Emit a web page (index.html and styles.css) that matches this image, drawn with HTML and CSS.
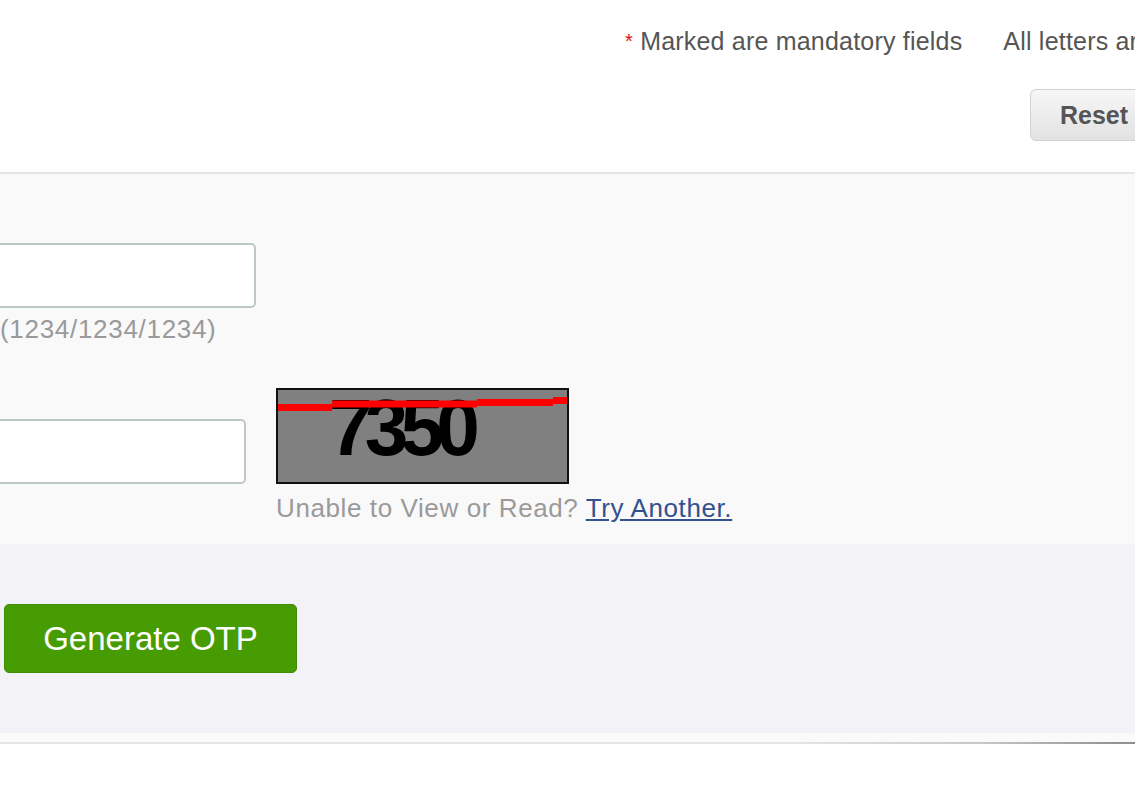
FILE: index.html
```html
<!DOCTYPE html>
<html lang="en">
<head>
  <meta charset="UTF-8">
  <meta name="viewport" content="width=device-width, initial-scale=1.0">
  <title>Generate OTP</title>
  <link rel="stylesheet" href="styles.css">
</head>
<body>
  <header class="top">
    <div class="notes">
      <span class="req">*</span> Marked are mandatory fields<span class="note-gap"></span>All letters are case sensitive
    </div>
    <div class="actions">
      <button class="btn-reset" type="reset">Reset</button>
    </div>
  </header>

  <div class="panel">
    <div class="field">
      <input type="text" class="input input-wide" id="refNumber">
      <div class="hint">(1234/1234/1234)</div>
    </div>

    <div class="captcha-row">
      <input type="text" class="input input-captcha" id="captchaText">
      <div class="captcha">
        <svg width="293" height="96" viewBox="0 0 293 96">
          <rect x="1" y="1" width="291" height="94" fill="#808080" stroke="#111" stroke-width="2"/>
          <text x="53" y="67" font-family="Liberation Sans, sans-serif" font-size="80" font-weight="bold" letter-spacing="-8" fill="#000" textLength="143" lengthAdjust="spacingAndGlyphs">7350</text>
          <path d="M2 19.5H56M56 16H201M201 14.5H277M277 12.5H291" stroke="#f00" stroke-width="7"/>
        </svg>
      </div>
      <div class="captcha-help">Unable to View or Read? <a href="#" class="link">Try Another.</a></div>
    </div>
  </div>

  <div class="footer">
    <button class="btn-otp" type="button">Generate OTP</button>
  </div>
  <div class="footer-edge"></div>
</body>
</html>
```

FILE: styles.css
```css
body {
  margin: 0;
  padding: 0;
  background: #fff;
  font-family: 'Liberation Sans', Arial, sans-serif;
  overflow: hidden;
}
.top {
  padding: 26px 0 31px 0;
  border-bottom: 2px solid #e6e6e6;
  white-space: nowrap;
}
.notes {
  padding-left: 625px;
  font-size: 25px;
  line-height: 30px;
  color: #555;
  letter-spacing: 0.2px;
}
.req {
  color: #e01010;
  font-size: 20px;
  vertical-align: top;
}
.note-gap {
  display: inline-block;
  width: 41px;
}
.actions {
  margin-top: 33px;
  padding-left: 1030px;
}
.btn-reset {
  height: 52px;
  width: 150px;
  padding: 0 0 0 29px;
  text-align: left;
  font-family: inherit;
  font-size: 25px;
  font-weight: bold;
  color: #555;
  background: linear-gradient(#f7f7f7, #e2e2e2);
  border: 1px solid #d2d2d2;
  border-radius: 6px;
}
.panel {
  background: #f9f9f9;
  padding: 69px 0 21px 0;
}
.input {
  display: block;
  box-sizing: border-box;
  height: 65px;
  background: #fff;
  border: 2px solid #bcc7c7;
  border-radius: 5px;
  margin-left: -44px;
}
.input-wide {
  width: 300px;
}
.input-captcha {
  width: 290px;
}
.hint {
  margin-top: 6px;
  font-size: 26px;
  line-height: 30px;
  color: #9a9a9a;
  letter-spacing: 0.7px;
}
.captcha-row {
  margin-top: 44px;
  display: grid;
  grid-template-columns: 246px auto;
  column-gap: 30px;
}
.input-captcha {
  align-self: end;
}
.captcha svg {
  display: block;
}
.captcha-help {
  grid-column: 2;
  margin-top: 9px;
  font-size: 26px;
  line-height: 30px;
  color: #9a9a9a;
  letter-spacing: 0.6px;
  white-space: nowrap;
}
.link {
  color: #34518f;
  text-decoration: underline;
}
.footer {
  background: #f3f3f7;
  padding: 60px 0 60px 4px;
}
.btn-otp {
  display: block;
  width: 293px;
  height: 69px;
  background: #479c04;
  border: 1px solid #3f8d03;
  border-radius: 5px;
  color: #fff;
  font-family: inherit;
  font-size: 33px;
  cursor: pointer;
}
.footer-edge {
  position: relative;
  height: 9px;
  background: #fafafa;
  border-bottom: 2px solid #e4e4e4;
}
.footer-edge::after {
  content: "";
  position: absolute;
  right: 0;
  top: 100%;
  width: 450px;
  height: 30px;
  background: radial-gradient(ellipse 100% 100% at 100% 0, rgba(0,0,0,0.4), rgba(0,0,0,0.12) 35%, rgba(0,0,0,0) 75%);
}
```
